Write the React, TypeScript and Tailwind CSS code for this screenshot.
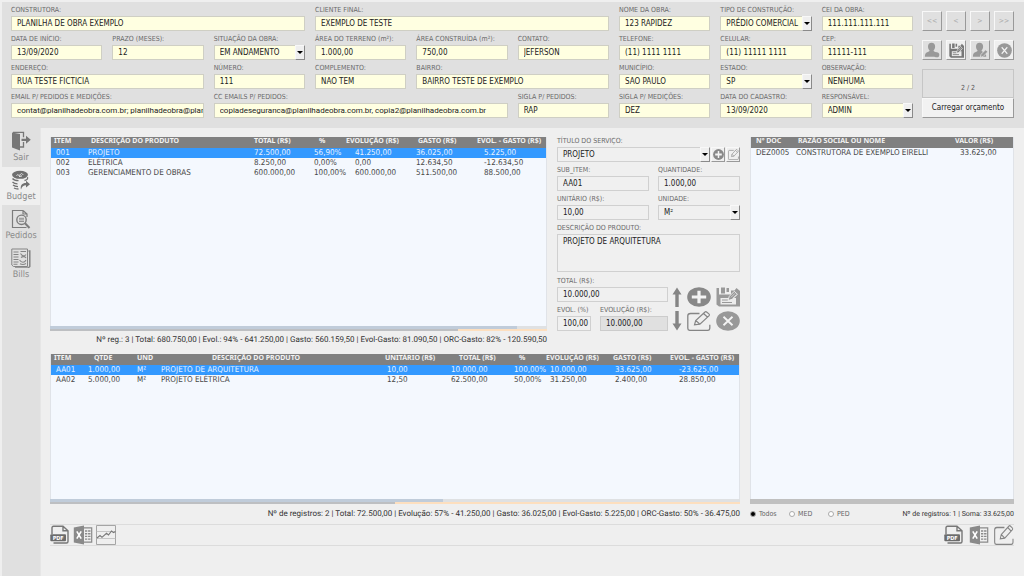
import { useEffect, useId, useRef, useState } from "react";
import type { ReactNode } from "react";

const box = "h-[15px] w-full min-w-0 border pl-[5px] text-[8px] leading-[13px] text-[#222] outline-none";
const yellow = "border-[#cfcfc4] bg-[#ffffe1]";
const plain = "border-[#d0d0d0] bg-[#f0f0f0]";
const shaded = "border-[#cccccc] bg-[#e0e0e0]";
const compact = "font-['Roboto',sans-serif]";

type FieldProps = {
  label: string;
  value: string;
  className?: string;
  tone?: string;
  options?: boolean;
  focused?: boolean;
  extra?: ReactNode;
};

function Field({ label, value, className = "", tone = yellow, options = false, focused = false, extra }: FieldProps) {
  const id = useId();
  const input = useRef<HTMLInputElement>(null);
  useEffect(() => {
    if (focused && input.current) {
      input.current.focus();
      input.current.setSelectionRange(value.length, value.length);
    }
  }, [focused, value]);
  return (
    <div className={`flex min-w-0 flex-col gap-px ${className}`}>
      <label htmlFor={id} className="h-[9px] text-[7px] leading-[9px] whitespace-nowrap text-[#6a6a6a]">
        {label}
      </label>
      <div className="flex gap-px">
        {options ? (
          <div className="relative min-w-0 flex-1">
            <select id={id} defaultValue={value} className={`${box} ${tone} block appearance-none`}>
              <option>{value}</option>
            </select>
            <span className="pointer-events-none absolute top-0 right-0 flex h-[15px] w-[10px] items-center justify-center border border-t-[#f8f8f8] border-r-[#8a8a8a] border-b-[#8a8a8a] border-l-[#f8f8f8] bg-[#efefef]">
              <svg viewBox="0 0 6 3" className="h-[3px] w-[6px] shrink-0 fill-black">
                <path d="M0 0h6L3 3z" />
              </svg>
            </span>
          </div>
        ) : (
          <input id={id} ref={input} defaultValue={value} className={`${box} ${tone}`} />
        )}
        {extra}
      </div>
    </div>
  );
}

const raised =
  "flex items-center justify-center border border-t-[#f8f8f8] border-l-[#f8f8f8] border-r-[#999] border-b-[#999]";

function ExitIcon() {
  return (
    <svg viewBox="0 0 20 20" className="h-5 w-5">
      <path d="M1 1.500l8 1.500v16.500L1 16.500z" fill="#777" />
      <path d="M2 1.300h10.500v5M12.500 11v5H9" fill="none" stroke="#777" strokeWidth="1.300" />
      <path d="M10.500 7.700h4.500V4.800l4.800 4-4.800 4v-2.900h-4.500z" fill="#777" />
    </svg>
  );
}

function BudgetIcon() {
  return (
    <svg viewBox="0 0 20 20" className="h-5 w-5">
      <ellipse cx="9" cy="4.800" rx="8" ry="4" fill="#707070" />
      <path d="M5.500 5.500c1-2 2.500 1.200 3.700-.8s2-1 3 .2M8 6.500l3-.6" fill="none" stroke="#eee" strokeWidth="1" />
      <path d="M1.500 8.500c1.500 2 3.500 2.200 6 2.200M1.500 12c1.500 1.500 3 1.800 5 1.800M2 15c1.500 1.300 2.500 1.600 5 1.600M3 18c1.500.9 2.500 1 4.500 1" fill="none" stroke="#707070" strokeWidth="1.300" />
      <path d="M16.500 7.200c.5 1.800-.5 3-3 3.300" fill="none" stroke="#707070" strokeWidth="1.300" />
      <path d="M10 19.500c-1-4 1-6.600 5-6.600V10.800l4 3.400-4 3.300v-2.200c-2.500 0-4 1-5 4.200z" fill="#707070" />
    </svg>
  );
}

function OrdersIcon() {
  return (
    <svg viewBox="0 0 20 20" className="h-5 w-5" fill="none" stroke="#7c7c7c">
      <path d="M12 1.500H1.500v17h14M12 1.500l4 3.500v3M12 1.500v3.500h4" strokeWidth="1.200" />
      <circle cx="10.500" cy="10.800" r="4.700" strokeWidth="1.400" />
      <path d="M8 9.300h5M8 10.900h5M8 12.500h5" strokeWidth=".8" />
      <path d="M14 14.300l4.500 4.700" strokeWidth="2" />
    </svg>
  );
}

function BillsIcon() {
  return (
    <svg viewBox="0 0 20 20" className="h-5 w-5" fill="none" stroke="#858585">
      <path d="M.8 1h15.700v17.500H2.500L.8 17z" strokeWidth="1" />
      <path d="M17.500 3h1.300v15.500L17 20H4" strokeWidth="1.500" />
      <path d="M2.500 4h5M2.500 6.500h5M2.500 9h5M2.500 11.500h5M2.500 14h5M2.500 16.300h4" strokeWidth="1.100" />
      <path d="M9.500 3.500h5.500M9.500 5.500c2 3 4 3 5.500 1M10 9.500c2-1.500 4-1 5 .5M8.500 12c2 3 5 3 6.500 0M9 15.800c2 1 4 1 6-.3" strokeWidth="1.100" />
    </svg>
  );
}

function UserIcon({ pencil = false }: { pencil?: boolean }) {
  return (
    <svg viewBox="0 0 18 18" className="h-4 w-4">
      <path d="M8.500.8c2.600 0 4 1.900 4 4.400 0 1.900-.7 3.500-1.800 4.400 0 1 1 1.300 2.600 1.800 1.900.6 2.700 1.800 2.700 5.300H1c0-3.500.8-4.700 2.700-5.300 1.600-.5 2.600-.8 2.600-1.800C5.200 8.700 4.500 7.100 4.500 5.200c0-2.500 1.400-4.400 4-4.400z" fill="#999" />
      {pencil ? (
        <path d="M9.300 17.300l.8-3.300 5.200-5.300 2.400 2.400-5.200 5.200z" fill="#999" stroke="#e2e2e2" strokeWidth=".9" />
      ) : (
        <circle cx="14.300" cy="14.300" r="2.900" fill="#999" />
      )}
    </svg>
  );
}

function SaveIcon({ className, color }: { className: string; color: string }) {
  return (
    <svg viewBox="0 0 24 20" preserveAspectRatio="none" className={className}>
      <path d="M.5 1H3v6.500h12V3.500h3.500l2-2.500L24 4v15.500H3L.5 17.500z" fill={color} />
      <path d="M5 .5h4v6H5zM10.500 1h2.500v4h-2.500z" fill={color} />
      <path d="M4.500 11h15.500v6.500H4.500z" fill="#ececec" />
      <path d="M6 13h6M6 15.500h10" stroke={color} strokeWidth="1.200" />
      <path d="M12 13.500l1.300-4.200 5-5 3.200 3-5.300 5z" fill={color} stroke="#f0f0f0" strokeWidth=".9" />
      <path d="M15 10.300l4-4M16.500 11.500l4-4" stroke="#f0f0f0" strokeWidth=".6" />
    </svg>
  );
}

function CrossIcon({ className, color }: { className: string; color: string }) {
  return (
    <svg viewBox="0 0 24 20" preserveAspectRatio="none" className={className}>
      <ellipse cx="12" cy="10" rx="11.800" ry="9.800" fill={color} />
      <path d="M7.500 5.800l9 8.400M16.500 5.800l-9 8.400" stroke="#f4f4f4" strokeWidth="1.900" />
    </svg>
  );
}

function PlusIcon({ className }: { className: string }) {
  return (
    <svg viewBox="0 0 24 20" preserveAspectRatio="none" className={className}>
      <ellipse cx="12" cy="10" rx="11.800" ry="9.800" fill="#888" />
      <path d="M12 3.800v12.400M4.800 10h14.400" stroke="#f4f4f4" strokeWidth="3.200" />
    </svg>
  );
}

function EditIcon({ className }: { className: string }) {
  return (
    <svg viewBox="0 0 24 20" preserveAspectRatio="none" className={className} fill="none" stroke="#858585">
      <path d="M12.500 2.500H3.500C1.800 2.500.8 3.300.8 4.800v12.400c0 1.400.9 2.200 2.500 2.200h17c1.600 0 2.500-.8 2.500-2.200v-3.500" strokeWidth="1.300" />
      <path d="M7.500 13.800l1.200-4.300 9-8.300c.7-.6 1.500-.6 2.200 0l2 1.700c.7.6.7 1.300 0 2l-9 8.200zM8.700 9.500l4.200 3.600M16.500 2.500l4.200 3.700" strokeWidth="1.200" />
    </svg>
  );
}

function ArrowIcon({ down = false }: { down?: boolean }) {
  return (
    <svg viewBox="0 0 10 20" className="h-5 w-[10px]" fill="#858585">
      {down ? <path d="M3.300 0h3.400v12.500H9.500L5 19.500.5 12.500h2.800z" /> : <path d="M3.300 20h3.400V7.500h2.800L5 .5.5 7.500h2.800z" />}
    </svg>
  );
}

function PdfIcon() {
  return (
    <svg viewBox="0 0 20 20" className="h-5 w-5">
      <path d="M2 9V2.800c0-1 .5-1.500 1.500-1.500h9.500l5 4.500v10.700c0 1-.5 1.500-1.500 1.500H3.500M13 1.300v4.500h5" fill="none" stroke="#777" strokeWidth="1.400" />
      <rect x=".3" y="9.300" width="15.700" height="7" rx="1" fill="#6c6c6c" />
      <text x="8.200" y="14.800" textAnchor="middle" fontSize="5.500" fontWeight="bold" fill="#fff">PDF</text>
    </svg>
  );
}

function ExcelIcon() {
  return (
    <svg viewBox="0 0 20 20" className="h-5 w-5">
      <path d="M.8 2.500L11 .6v18.800L.8 17.500z" fill="#8a8a8a" />
      <path d="M3.800 6.300l4.400 7.400M8.200 6.300l-4.400 7.400" stroke="#fff" strokeWidth="1.600" />
      <path d="M11 2.900h7.700v14.200H11" fill="none" stroke="#8a8a8a" strokeWidth="1.200" />
      <path d="M12 6h5.500M12 8.700h5.500M12 11.400h5.500M12 14.100h5.500" stroke="#8a8a8a" strokeWidth="1.400" />
      <path d="M14.600 4v12" stroke="#efefef" strokeWidth=".8" />
    </svg>
  );
}

function ChartIcon() {
  return (
    <svg viewBox="0 0 20 20" className="h-5 w-5" fill="none">
      <path d="M.5.500h19v19H.5z" stroke="#a5a5a5" />
      <path d="M.5 6.500h19M.5 13.500h19" stroke="#bbb" strokeWidth=".8" />
      <path d="M1 13l3-2.500 2 1.800 4.500-4 2 1.700 3-4 2 1.700 2-1.200" stroke="#777" strokeWidth="1.100" />
    </svg>
  );
}

type Column = { title: string; width: string; th: string; td: string };

const budgetColumns: Column[] = [
  { title: "ITEM", width: "w-[36px]", th: "pl-[3px]", td: "pl-[5px]" },
  { title: "DESCRIÇÃO DO PRODUTO", width: "w-auto", th: "pl-[4px]", td: "pl-[1px]" },
  { title: "TOTAL (R$)", width: "w-[60px]", th: "pl-[2px]", td: "pl-[2px]" },
  { title: "%", width: "w-[34px]", th: "pl-[7px]", td: "pl-[2px]" },
  { title: "EVOLUÇÃO (R$)", width: "w-[68px]", th: "pl-0", td: "pl-[9px]" },
  { title: "GASTO (R$)", width: "w-[61px]", th: "pl-[4px]", td: "pl-[2px]" },
  { title: "EVOL. - GASTO (R$)", width: "w-[71px]", th: "pl-[2px]", td: "pl-[9px]" },
];

const budgetRows = [
  ["001", "PROJETO", "72.500,00", "56,90%", "41.250,00", "36.025,00", "5.225,00"],
  ["002", "ELÉTRICA", "8.250,00", "0,00%", "0,00", "12.634,50", "-12.634,50"],
  ["003", "GERENCIAMENTO DE OBRAS", "600.000,00", "100,00%", "600.000,00", "511.500,00", "88.500,00"],
];

const itemColumns: Column[] = [
  { title: "ITEM", width: "w-[36px]", th: "pl-[3px]", td: "pl-[5px]" },
  { title: "QTDE", width: "w-[49px]", th: "pl-[7px]", td: "pl-[1px]" },
  { title: "UND", width: "w-[24px]", th: "pl-[1px]", td: "pl-[1px]" },
  { title: "DESCRIÇÃO DO PRODUTO", width: "w-auto", th: "pl-[52px]", td: "pl-[1px]" },
  { title: "UNITÁRIO (R$)", width: "w-[66px]", th: "pl-[2px]", td: "pl-[4px]" },
  { title: "TOTAL (R$)", width: "w-[64px]", th: "pl-[10px]", td: "pl-[2px]" },
  { title: "%", width: "w-[32px]", th: "pl-[6px]", td: "pl-[1px]" },
  { title: "EVOLUÇÃO (R$)", width: "w-[66px]", th: "pl-[1px]", td: "pl-[5px]" },
  { title: "GASTO (R$)", width: "w-[57px]", th: "pl-[2px]", td: "pl-[4px]" },
  { title: "EVOL. - GASTO (R$)", width: "w-[71px]", th: "pl-[2px]", td: "pl-[11px]" },
];

const itemRows = [
  ["AA01", "1.000,00", "M²", "PROJETO DE ARQUITETURA", "10,00", "10.000,00", "100,00%", "10.000,00", "33.625,00", "-23.625,00"],
  ["AA02", "5.000,00", "M²", "PROJETO ELÉTRICA", "12,50", "62.500,00", "50,00%", "31.250,00", "2.400,00", "28.850,00"],
];

const docColumns: Column[] = [
  { title: "Nº DOC", width: "w-[44px]", th: "pl-[5px]", td: "pl-[5px]" },
  { title: "RAZÃO SOCIAL OU NOME", width: "w-auto", th: "pl-[3px]", td: "pl-[1px]" },
  { title: "VALOR (R$)", width: "w-[60px]", th: "pl-[2px]", td: "pl-[7px]" },
];

const docRows = [["DEZ0005", "CONSTRUTORA DE EXEMPLO EIRELLI", "33.625,00"]];

type GridProps = { columns: Column[]; rows: string[][]; selected?: number; progress?: [number, number] };

function DataGrid({ columns, rows, selected = -1, progress }: GridProps) {
  return (
    <div className="flex min-w-0 flex-1 flex-col">
      <div className="flex-1 border-x border-[#e0e3e8] bg-[#f4f8fe]">
        <table className="w-full table-fixed border-collapse text-left text-[8px] whitespace-nowrap text-[#484848]">
          <thead>
            <tr className="h-[11px] bg-[#808080] font-['Noto_Sans',sans-serif] text-[7px] leading-[9px] text-[#f4f4f4]">
              {columns.map((c) => (
                <th key={c.title} className={`${c.width} ${c.th} py-0 pr-0 align-top font-bold`}>
                  {c.title}
                </th>
              ))}
            </tr>
          </thead>
          <tbody>
            {rows.map((row, r) => (
              <tr key={row[0]} className={r === selected ? "bg-[#3399ff] leading-[10px] text-[#e6f2ff]" : "leading-[10px]"}>
                {row.map((cell, i) => (
                  <td key={columns[i].title} className={`${columns[i].td} py-0 pr-0`}>
                    {cell}
                  </td>
                ))}
              </tr>
            ))}
          </tbody>
        </table>
      </div>
      {progress ? (
        <div>
          <div className="h-[3px] bg-[#dfe1e3]">
            <div className="h-full bg-[#c0ccda]" style={{ width: `${progress[0]}%` }} />
          </div>
          <div className="h-[2px] bg-[#fddfbf]">
            <div className="h-full bg-[#bdbfc2]" style={{ width: `${progress[1]}%` }} />
          </div>
        </div>
      ) : (
        <div className="h-[5px] bg-[#c0c0c0]" />
      )}
    </div>
  );
}

const sections = [
  { name: "Sair", icon: <ExitIcon /> },
  { name: "Budget", icon: <BudgetIcon /> },
  { name: "Pedidos", icon: <OrdersIcon /> },
  { name: "Bills", icon: <BillsIcon /> },
];

function Header() {
  return (
    <header className="flex gap-[9px] pt-1 pr-[10px] pb-[10px] pl-[9px]">
      <div className="grid min-w-0 flex-1 grid-cols-9 gap-x-[10px] gap-y-1">
        <Field label="CONSTRUTORA:" value="PLANILHA DE OBRA EXEMPLO" className="col-span-3" focused />
        <Field label="CLIENTE FINAL:" value="EXEMPLO DE TESTE" className="col-span-3" />
        <Field label="NOME DA OBRA:" value="123 RAPIDEZ" />
        <Field label="TIPO DE CONSTRUÇÃO:" value="PRÉDIO COMERCIAL" options />
        <Field label="CEI DA OBRA:" value="111.111.111.111" />

        <Field label="DATA DE INÍCIO:" value="13/09/2020" />
        <Field label="PRAZO (MESES):" value="12" />
        <Field label="SITUAÇÃO DA OBRA:" value="EM ANDAMENTO" options />
        <Field label="ÁREA DO TERRENO (m²):" value="1.000,00" />
        <Field label="ÁREA CONSTRUÍDA (m²):" value="750,00" />
        <Field label="CONTATO:" value="JEFERSON" />
        <Field label="TELEFONE:" value="(11) 1111 1111" />
        <Field label="CELULAR:" value="(11) 11111 1111" />
        <Field label="CEP:" value="11111-111" />

        <Field label="ENDEREÇO:" value="RUA TESTE FICTÍCIA" className="col-span-2" />
        <Field label="NÚMERO:" value="111" />
        <Field label="COMPLEMENTO:" value="NÃO TEM" />
        <Field label="BAIRRO:" value="BAIRRO TESTE DE EXEMPLO" className="col-span-2" />
        <Field label="MUNICÍPIO:" value="SÃO PAULO" />
        <Field label="ESTADO:" value="SP" options />
        <Field label="OBSERVAÇÃO:" value="NENHUMA" />

        <Field
          label="EMAIL P/ PEDIDOS E MEDIÇÕES:"
          value="contat@planilhadeobra.com.br; planilhadeobra@planilhadeobra.com.br"
          className="col-span-2"
          tone={`${yellow} ${compact}`}
        />
        <Field
          label="CC EMAILS P/ PEDIDOS:"
          value="copiadeseguranca@planilhadeobra.com.br, copia2@planilhadeobra.com.br"
          className="col-span-3"
          tone={`${yellow} ${compact}`}
        />
        <Field label="SIGLA P/ PEDIDOS:" value="RAP" />
        <Field label="SIGLA P/ MEDIÇÕES:" value="DEZ" />
        <Field label="DATA DO CADASTRO:" value="13/09/2020" />
        <Field label="RESPONSÁVEL:" value="ADMIN" options />
      </div>
      <div className="flex w-[92px] shrink-0 flex-col pt-[5px]">
        <div className="grid grid-cols-4 gap-x-1 gap-y-[9px]">
          {["<<", "<", ">", ">>"].map((t) => (
            <button key={t} className={`${raised} h-5 text-[7px] text-[#aaa]`}>
              {t}
            </button>
          ))}
          <button aria-label="Novo cliente" className={`${raised} h-5`}>
            <UserIcon />
          </button>
          <button aria-label="Salvar" className={`${raised} h-5 bg-[#efefef]`}>
            <SaveIcon className="h-[15px] w-[15px]" color="#777" />
          </button>
          <button aria-label="Editar cliente" className={`${raised} h-5`}>
            <UserIcon pencil />
          </button>
          <button aria-label="Cancelar" className={`${raised} h-5 bg-[#efefef]`}>
            <CrossIcon className="h-[15px] w-[15px]" color="#999" />
          </button>
        </div>
        <div className="mt-[9px] flex h-[29px] items-end justify-center border border-[#c6c6c6] pb-[4px] text-[7px] leading-[10px] text-[#555]">
          2 / 2
        </div>
        <button className={`${raised} h-5 bg-[#f2f2f2] text-[8px] text-[#222]`}>Carregar orçamento</button>
      </div>
    </header>
  );
}

function ItemForm() {
  const descriptionId = useId();
  return (
    <form className="flex w-[183px] shrink-0 flex-col gap-1" onSubmit={(e) => e.preventDefault()}>
      <Field
        label="TÍTULO DO SERVIÇO:"
        value="PROJETO"
        tone={plain}
        options
        extra={
          <>
            <button aria-label="Adicionar serviço" className={`${raised} h-[15px] w-[14px]`}>
              <PlusIcon className="h-[11px] w-[11px] shrink-0" />
            </button>
            <button aria-label="Editar serviço" className={`${raised} h-[15px] w-[14px]`}>
              <EditIcon className="h-[11px] w-[11px] shrink-0" />
            </button>
          </>
        }
      />
      <div className="flex gap-[9px]">
        <Field label="SUB_ITEM:" value="AA01" tone={plain} className="w-[92px]" />
        <Field label="QUANTIDADE:" value="1.000,00" tone={plain} className="flex-1" />
      </div>
      <div className="flex gap-[9px]">
        <Field label="UNITÁRIO (R$):" value="10,00" tone={plain} className="w-[92px]" />
        <Field label="UNIDADE:" value="M²" tone={plain} options className="flex-1" />
      </div>
      <div className="flex flex-col gap-px">
        <label htmlFor={descriptionId} className="text-[7px] leading-[9px] text-[#6a6a6a]">
          DESCRIÇÃO DO PRODUTO:
        </label>
        <textarea
          id={descriptionId}
          defaultValue="PROJETO DE ARQUITETURA"
          className="h-[38px] w-full resize-none border border-[#d0d0d0] bg-[#f0f0f0] px-[5px] text-[8px] leading-[13px] text-[#222] outline-none"
        />
      </div>
      <div className="flex gap-1 pt-px">
        <div className="flex w-[111px] flex-col gap-1">
          <Field label="TOTAL (R$):" value="10.000,00" tone={plain} />
          <div className="flex gap-[9px]">
            <Field label="EVOL. (%)" value="100,00" tone={plain} className="w-[34px]" />
            <Field label="EVOLUÇÃO (R$):" value="10.000,00" tone={shaded} className="flex-1" />
          </div>
        </div>
        <div className="flex flex-1 items-end justify-between">
          <div className="flex flex-col gap-1">
            <button aria-label="Mover para cima"><ArrowIcon /></button>
            <button aria-label="Mover para baixo"><ArrowIcon down /></button>
          </div>
          <div className="flex flex-col gap-1">
            <button aria-label="Adicionar item"><PlusIcon className="h-5 w-6" /></button>
            <button aria-label="Editar item"><EditIcon className="h-5 w-6" /></button>
          </div>
          <div className="flex flex-col gap-1">
            <button aria-label="Salvar item"><SaveIcon className="h-5 w-6" color="#999" /></button>
            <button aria-label="Excluir item"><CrossIcon className="h-5 w-6" color="#999" /></button>
          </div>
        </div>
      </div>
    </form>
  );
}

export default function App() {
  const [filter, setFilter] = useState("Todos");
  return (
    <div className="flex min-h-screen flex-col bg-[#efefef] pt-[2px] pl-[2px] font-['DejaVu_Sans_Condensed','Noto_Sans',sans-serif] text-[#333] [text-rendering:geometricPrecision]">
      <div className="flex flex-1 flex-col bg-[#e0e0e0]">
        <Header />
        <div className="flex flex-1">
          <nav className="flex w-[38px] shrink-0 flex-col gap-px">
            {sections.map((s) => (
              <a
                key={s.name}
                href={`#${s.name.toLowerCase()}`}
                className={`flex h-[38px] flex-col items-center justify-center gap-px text-[9px] leading-[12px] text-[#8a8a8a] ${s.name === "Budget" ? "bg-[#efefef]" : ""}`}
              >
                {s.icon}
                {s.name}
              </a>
            ))}
          </nav>
          <main className="flex min-w-0 flex-1 flex-col border-l border-[#e6e6e6] bg-[#efefef] pt-[9px] pr-[10px] pb-[30px] pl-[9px]">
            <div className="flex flex-1 gap-[10px]">
              <div className="flex min-w-0 flex-1 flex-col">
                <div className="flex gap-[10px]">
                  <DataGrid columns={budgetColumns} rows={budgetRows} selected={0} progress={[94, 82]} />
                  <ItemForm />
                </div>
                <p className={`${compact} mt-1 mr-[193px] mb-[9px] text-right text-[8px] leading-[10px] whitespace-nowrap`}>
                  Nº reg.: 3 | Total: 680.750,00 | Evol.: 94% - 641.250,00 | Gasto: 560.159,50 | Evol-Gasto: 81.090,50 | ORC-Gasto: 82% - 120.590,50
                </p>
                <DataGrid columns={itemColumns} rows={itemRows} selected={0} progress={[57, 50]} />
                <p className={`${compact} my-[5px] text-right text-[8px] leading-[10px] whitespace-nowrap`}>
                  Nº de registros: 2 | Total: 72.500,00 | Evolução: 57% - 41.250,00 | Gasto: 36.025,00 | Evol-Gasto: 5.225,00 | ORC-Gasto: 50% - 36.475,00
                </p>
              </div>
              <section className="flex w-[264px] shrink-0 flex-col">
                <DataGrid columns={docColumns} rows={docRows} />
                <div className="my-[5px] flex items-center text-[7px] leading-[10px] whitespace-nowrap">
                  {["Todos", "MED", "PED"].map((f) => (
                    <label key={f} className="flex w-[39px] items-center gap-[3px] text-[#666]">
                      <input
                        type="radio"
                        name="filter"
                        checked={filter === f}
                        onChange={() => setFilter(f)}
                        className="h-[6px] w-[6px] appearance-none rounded-full border border-[#aaa] bg-white checked:bg-black"
                      />
                      {f}
                    </label>
                  ))}
                  <span className={`${compact} ml-auto`}>Nº de registros: 1 | Soma: 33.625,00</span>
                </div>
              </section>
            </div>
            <div className="flex items-center justify-between border-y border-[#dcdcdc]">
              <div className="flex gap-[3px]">
                <button aria-label="Exportar itens em PDF"><PdfIcon /></button>
                <button aria-label="Exportar itens para Excel"><ExcelIcon /></button>
                <button aria-label="Gráfico"><ChartIcon /></button>
              </div>
              <div className="flex gap-[5px]">
                <button aria-label="Exportar documentos em PDF"><PdfIcon /></button>
                <button aria-label="Exportar documentos para Excel"><ExcelIcon /></button>
                <button aria-label="Editar documento"><EditIcon className="h-5 w-5" /></button>
              </div>
            </div>
          </main>
        </div>
      </div>
    </div>
  );
}
